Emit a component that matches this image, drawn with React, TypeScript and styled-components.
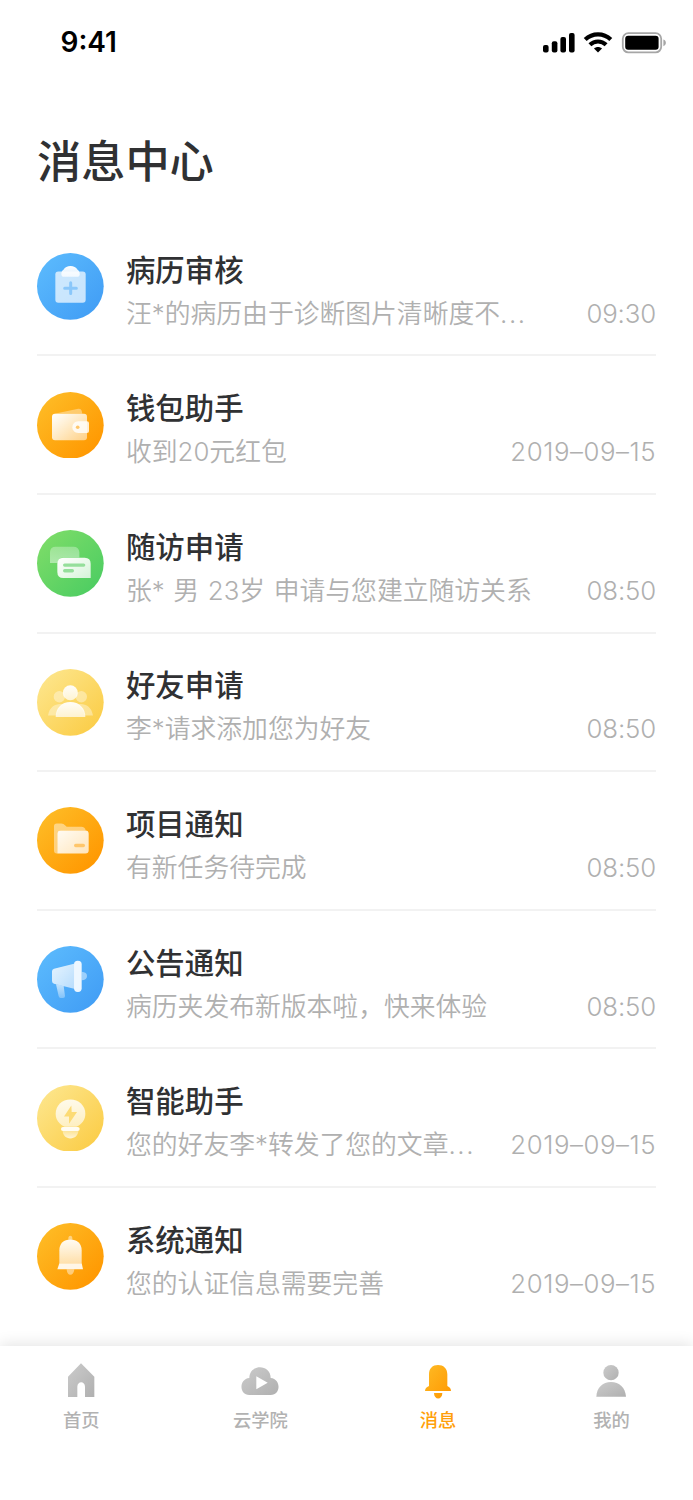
import React from 'react';
import styled, { createGlobalStyle } from 'styled-components';

const Global = createGlobalStyle`
  * { box-sizing: border-box; }
  body { margin: 0; background: #fff; font-family: Inter, "Noto Sans CJK SC", sans-serif; }
`;

const Screen = styled.div`
  width: 693px;
  height: 1500px;
  display: flex;
  flex-direction: column;
  overflow: hidden;
  background: #fff;
`;

const StatusBar = styled.header`
  height: 84px;
  padding: 0 27px 0 60.5px;
  display: flex;
  align-items: center;
  justify-content: space-between;
  flex: none;
`;

const Clock = styled.span`
  font-size: 28px;
  font-weight: 600;
  line-height: 34px;
  color: #000;
`;

const Heading = styled.h1`
  margin: 0;
  height: 133.9px;
  padding: 46px 37px 0;
  font-size: 44.2px;
  line-height: 64px;
  font-weight: 500;
  color: #303133;
  flex: none;
`;

const List = styled.main`
  flex: 1;
  min-height: 0;
  padding: 0 37px;
`;

const Row = styled.article`
  height: 138.57px;
  display: flex;
  padding-top: 35.3px;
  border-bottom: 2px solid #f2f2f2;

  &:last-child { border-bottom: 0; }
`;

const Badge = styled.svg`
  width: 66.7px;
  height: 66.7px;
  flex: none;
`;

const Body = styled.div`
  flex: 1;
  min-width: 0;
  margin: -4.5px 0 0 22.3px;
`;

const Title = styled.h2`
  margin: 0;
  font-size: 29.4px;
  line-height: 44px;
  font-weight: 500;
  color: #303133;
`;

const Line = styled.div`
  display: flex;
  justify-content: space-between;
  font-size: 25.8px;
  line-height: 42px;
  font-weight: 300;
  color: #b0b0b0;
  white-space: pre;
`;

const Summary = styled.span`
  font-weight: 350;
  word-spacing: 1.4px;
`;

const Dots = styled.span`
  letter-spacing: 1.6px;
`;

const Time = styled.time<{ $wide: boolean }>`
  line-height: 41px;
  letter-spacing: ${(p) => (p.$wide ? '0.55px' : '-0.15px')};
`;

const TabBar = styled.nav`
  position: relative;
  height: 154px;
  flex: none;
  display: grid;
  grid-template-columns: 179.2px 177.5px 173.5px 60px;
  justify-items: start;
  align-items: start;
  padding: 15px 0 0 51.3px;
  background: #fff;
  box-shadow: 0 -2px 14px rgba(0, 0, 0, 0.11);
`;

const Tab = styled.a<{ $active?: boolean }>`
  width: 60px;
  display: flex;
  flex-direction: column;
  align-items: center;
  font-size: 18.3px;
  line-height: 28px;
  font-weight: 500;
  color: ${(p) => (p.$active ? '#ff9f0a' : '#b2b2b2')};
`;

const TabIcon = styled.svg`
  width: 40px;
  height: 40px;
  margin-bottom: 5px;
`;

type Tone = 'blue' | 'orange' | 'green' | 'yellow';

const tones: Record<Tone, [string, string]> = {
  blue: ['#5ab9fd', '#429ef5'],
  orange: ['#febb25', '#ff9700'],
  green: ['#7cdc68', '#4dcd62'],
  yellow: ['#fde58a', '#fbcd48'],
};

const whiteFade = (id: string, from: number, to: number, x2 = '1', y2 = '1') => (
  <linearGradient id={id} x1="0" y1="0" x2={x2} y2={y2}>
    <stop stopColor="#fff" stopOpacity={from} />
    <stop offset="1" stopColor="#fff" stopOpacity={to} />
  </linearGradient>
);

interface Message {
  title: string;
  text: string;
  clipped?: boolean;
  time: string;
  tone: Tone;
  top: number;
  art: React.ReactNode;
}

const messages: Message[] = [
  {
    title: '病历审核', text: '汪*的病历由于诊断图片清晰度不', clipped: true, time: '09:30', tone: 'blue', top: 39.6,
    art: (
      <>
        <defs>{whiteFade('clip', 1, 0.75, '0')}</defs>
        <rect x="91" y="95" width="91" height="94" rx="9" fill="#fff" fillOpacity=".7" />
        <path d="M109 103C109 96 112 92 116 89C122 75 151 75 157 89C161 92 164 96 164 103C164 108 161 111 156 111H117C112 111 109 108 109 103Z" fill="url(#clip)" />
        <path d="M137 129V161M119 145H154" stroke="#8ac7fa" strokeWidth="9" strokeLinecap="round" />
      </>
    ),
  },
  {
    title: '钱包助手', text: '收到20元红包', time: '2019–09–15', tone: 'orange', top: 35.4,
    art: (
      <>
        <defs>{whiteFade('wallet', 1, 0.5)}</defs>
        <path d="M88 101L160 86Q168 85 170 92L172 101Z" fill="#fff" fillOpacity=".38" />
        <rect x="81" y="101" width="105" height="79" rx="9" fill="url(#wallet)" />
        <path d="M160 123H186Q192 123 192 129V152Q192 158 186 158H160C149 158 142 150 142 141S149 123 160 123Z" fill="#fff" fillOpacity=".82" />
        <circle cx="158" cy="141" r="5.5" fill="#ffc66a" />
      </>
    ),
  },
  {
    title: '随访申请', text: '张* 男 23岁 申请与您建立随访关系', time: '08:50', tone: 'green', top: 30.9,
    art: (
      <>
        <defs>{whiteFade('chatBack', 0.3, 0.45, '0')}{whiteFade('chatFront', 1, 0.75)}</defs>
        <path d="M75 130V98Q75 81 92 81H145Q162 81 163 98V113H115Q98 115 98 130Z" fill="url(#chatBack)" />
        <path d="M115 114H179Q197 114 197 132V175H115Q97 175 97 157V132Q97 114 115 114Z" fill="url(#chatFront)" />
        <path d="M119 136H176M119 153H142" stroke="#95df9b" strokeWidth="10" strokeLinecap="round" />
      </>
    ),
  },
  {
    title: '好友申请', text: '李*请求添加您为好友', time: '08:50', tone: 'yellow', top: 41.7,
    art: (
      <>
        <defs>{whiteFade('friends', 0.95, 0.7, '0')}</defs>
        <g fill="#fff" fillOpacity=".38">
          <circle cx="103" cy="125" r="17" /><circle cx="169" cy="125" r="17" />
          <path d="M69 181C73 158 88 147 106 147C120 148 100 155 94 181Z" />
          <path d="M204 181C200 158 185 147 167 147C152 148 173 155 179 181Z" />
        </g>
        <circle cx="136" cy="113" r="22.5" fill="url(#friends)" />
        <path d="M92 186C92 159 110 141 136 141S181 159 181 186Z" fill="url(#friends)" />
      </>
    ),
  },
  {
    title: '项目通知', text: '有新任务待完成', time: '08:50', tone: 'orange', top: 37.5,
    art: (
      <>
        <defs>{whiteFade('folder', 0.95, 0.72)}</defs>
        <path d="M87 168V95Q87 87 95 87H109Q116 87 120 92L125 97H169Q180 97 182 108H107Q97 108 97 118V177H95Q87 177 87 168Z" fill="#fff" fillOpacity=".45" />
        <path d="M97 177V118Q97 108 107 108H181Q191 108 191 118V167Q191 177 181 177Z" fill="url(#folder)" />
        <rect x="147" y="148" width="33" height="10" rx="5" fill="#ffc66a" />
      </>
    ),
  },
  {
    title: '公告通知', text: '病历夹发布新版本啦，快来体验', time: '08:50', tone: 'blue', top: 33,
    art: (
      <>
        <defs>{whiteFade('horn', 0.85, 0.6)}{whiteFade('grip', 0.65, 0.3, '0')}</defs>
        <path d="M170 110Q186 111 186 123T170 136Z" fill="#fff" fillOpacity=".45" />
        <path d="M93 148L116 153L120 183Q120 189 114 189H107Q102 189 101 184Z" fill="url(#grip)" />
        <path d="M87 101L147 86V161L87 146Q81 144 81 138V109Q81 103 87 101Z" fill="url(#horn)" />
        <rect x="147" y="77" width="23" height="94" rx="11" fill="#fff" fillOpacity=".9" />
      </>
    ),
  },
  {
    title: '智能助手', text: '您的好友李*转发了您的文章', clipped: true, time: '2019–09–15', tone: 'yellow', top: 43.8,
    art: (
      <>
        <defs>{whiteFade('bulb', 0.85, 0.6, '0')}{whiteFade('bulbBase', 0.35, 0.75, '0')}</defs>
        <path d="M119 169C102 161 92 148 92 130C92 105 111 87 136 87S181 105 181 130C181 148 171 161 154 169Z" fill="url(#bulb)" />
        <path d="M113 182H160C159 196 149 204 136 204S114 196 113 182Z" fill="url(#bulbBase)" />
        <rect x="108" y="170" width="56" height="12" rx="6" fill="#fff" fillOpacity=".92" />
        <path d="M139 105L117 138H132V160L156 125H140Z" fill="#fcdb75" />
      </>
    ),
  },
  {
    title: '系统通知', text: '您的认证信息需要完善', time: '2019–09–15', tone: 'orange', top: 39.6,
    art: (
      <>
        <defs>{whiteFade('bell', 0.95, 0.65, '0')}</defs>
        <path d="M130 90V84Q131 78 136 78T142 84V90ZM125 178H148Q146 195 136 195T125 178Z" fill="#fff" fillOpacity=".45" />
        <path d="M103 160V121C103 101 117 89 136 89S170 101 170 121V160Z" fill="url(#bell)" />
        <path d="M103 160H170L174 178H97Z" fill="#fff" fillOpacity=".9" />
      </>
    ),
  },
];

const StatusIcons = () => (
  <svg width="124" height="24" viewBox="0 0 124 24" aria-hidden="true">
    <g>
      <rect x="1" y="15" width="5.6" height="7.5" rx="2" />
      <rect x="9.8" y="11.3" width="5.6" height="11.2" rx="2" />
      <rect x="18.4" y="7" width="5.6" height="15.5" rx="2" />
      <rect x="27" y="3" width="5.6" height="19.5" rx="2" />
    </g>
    <g fill="none" stroke="#000" strokeWidth="4.2">
      <path d="M43.2 9.6C50.5 2.6 61.5 2.6 68.8 9.6" />
      <path d="M47.9 14.7C52.5 10.4 59.5 10.4 64.1 14.7" />
    </g>
    <path d="M52 18.4C54.4 16.4 57.6 16.4 60 18.4L56 22.6Z" />
    <rect x="80.8" y="3.2" width="38.4" height="19.2" rx="5.6" fill="none" stroke="#a6a6a6" strokeWidth="1.8" />
    <rect x="83.2" y="5.8" width="33.4" height="14" rx="3" />
    <path d="M121.4 9.4C124.7 10.4 124.7 15.2 121.4 16.2Z" fill="#a6a6a6" />
  </svg>
);

const App = () => (
  <>
    <Global />
    <Screen>
      <StatusBar>
        <Clock>9:41</Clock>
        <StatusIcons />
      </StatusBar>
      <Heading>消息中心</Heading>
      <List>
        {messages.map((m, i) => (
          <Row key={m.title}>
            <Badge viewBox="0 0 200 200" aria-hidden="true">
              <defs>
                <linearGradient id={`disc${i}`} x1="0.1" y1="0.1" x2="0.9" y2="0.9">
                  <stop stopColor={tones[m.tone][0]} />
                  <stop offset="1" stopColor={tones[m.tone][1]} />
                </linearGradient>
              </defs>
              <circle cx="100" cy="100" r="100" fill={`url(#disc${i})`} />
              <g transform={`translate(-36 ${-m.top})`}>{m.art}</g>
            </Badge>
            <Body>
              <Title>{m.title}</Title>
              <Line>
                <Summary>
                  {m.text}
                  {m.clipped && <Dots>...</Dots>}
                </Summary>
                <Time $wide={m.time.length > 5}>{m.time}</Time>
              </Line>
            </Body>
          </Row>
        ))}
      </List>
      <TabBar>
        <Tab>
          <TabIcon viewBox="0 0 120 120" fill="url(#gray)">
            <defs>
              <linearGradient id="gray" x1="0" y1="0" x2="1" y2="1">
                <stop stopColor="#cbcbcb" /><stop offset="1" stopColor="#b0b0b0" />
              </linearGradient>
              <linearGradient id="amber" x1="0" y1="0" x2="1" y2="1">
                <stop stopColor="#febb25" /><stop offset="1" stopColor="#ff9700" />
              </linearGradient>
            </defs>
            <path d="M21 47L60 7L100 47V108H72V77C72 59 49 59 49 77V108H21Z" />
          </TabIcon>
          首页
        </Tab>
        <Tab>
          <TabIcon viewBox="0 0 120 120">
            <path d="M28 102C-3 102-4 54 28 51C28 8 92 8 92 51C124 54 123 102 92 102Z" fill="url(#gray)" />
            <path d="M49 46V85L83 65Z" fill="#fff" />
          </TabIcon>
          云学院
        </Tab>
        <Tab $active>
          <TabIcon viewBox="0 0 120 120" fill="url(#amber)">
            <path d="M33 75V40C33 22 44 12 60 12S88 22 88 40V75Q99 80 99 90H21Q21 80 33 75ZM48 96H73C73 118 48 118 48 96Z" />
          </TabIcon>
          消息
        </Tab>
        <Tab>
          <TabIcon viewBox="0 0 120 120" fill="url(#gray)">
            <circle cx="60" cy="35" r="23" />
            <path d="M16 107C17 80 35 63 60 63S103 80 105 107Z" />
          </TabIcon>
          我的
        </Tab>
      </TabBar>
    </Screen>
  </>
);

export default App;
